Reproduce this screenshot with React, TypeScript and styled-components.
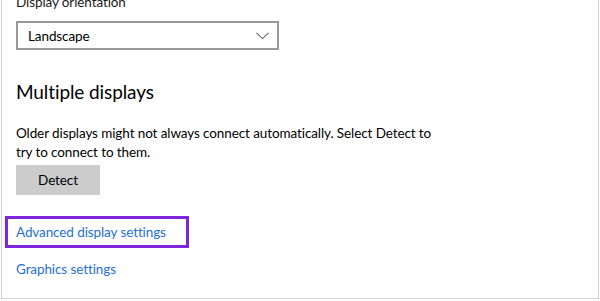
import React from 'react';
import styled, {createGlobalStyle} from "styled-components";

const GlobalStyle = createGlobalStyle`
  html, body {
    margin: 0;
    padding: 0;
    background: #ffffff;
  }
`

const Frame = styled.div`
  box-sizing: border-box;
  width: 598px;
  height: 299px;
  margin-left: 1px;
  border: 1px solid #d2d2d2;
  border-top: none;
  overflow: hidden;
  font-family: Lato, "Noto Sans", sans-serif;
  font-size: 13.5px;
  letter-spacing: -0.1px;
  color: #000;
`

const Content = styled.div`
  display: flex;
  flex-direction: column;
  align-items: flex-start;
  padding-left: 14px;
  margin-top: -8px;
`

const Label = styled.div`
  line-height: 20px;
  color: #1a1a1a;
`

const Select = styled.div`
  box-sizing: border-box;
  width: 263px;
  height: 29px;
  margin-top: 9px;
  border: 2px solid #999999;
  display: flex;
  align-items: center;
  justify-content: space-between;
  padding: 0 8px 0 10px;
`

const Heading = styled.h2`
  margin: 28px 0 0;
  font-size: 19px;
  font-weight: normal;
  line-height: 28px;
`

const Text = styled.p`
  margin: 18px 0 0;
  line-height: 19px;
  max-width: 420px;
`

const Button = styled.button`
  width: 84px;
  height: 30px;
  margin-top: 3px;
  border: none;
  background: #cccccc;
  font-family: inherit;
  font-size: inherit;
  letter-spacing: inherit;
  color: #000;
  padding: 0;
`

const Highlight = styled.div`
  margin: 21px 0 0 -11px;
  border: 3px solid #8125dc;
  padding: 3px 20px 3px 8px;
`

const Link = styled.a<{ $top?: number }>`
  display: block;
  margin-top: ${p => p.$top ?? 0}px;
  line-height: 20px;
  color: #1f6fd6;
  text-decoration: none;
`

const Chevron = () => (
    <svg width="13" height="8" viewBox="0 0 13 8">
        <path d="M0.5 0.8 L6.5 6.6 L12.5 0.8" fill="none" stroke="#666" strokeWidth="1.1"/>
    </svg>
)

const App = () => {
    return (
        <>
            <GlobalStyle/>
            <Frame>
                <Content>
                    <Label>Display orientation</Label>
                    <Select>
                        <span>Landscape</span>
                        <Chevron/>
                    </Select>
                    <Heading>Multiple displays</Heading>
                    <Text>
                        Older displays might not always connect automatically. Select Detect to
                        try to connect to them.
                    </Text>
                    <Button>Detect</Button>
                    <Highlight>
                        <Link href="#">Advanced display settings</Link>
                    </Highlight>
                    <Link href="#" $top={11}>Graphics settings</Link>
                </Content>
            </Frame>
        </>
    );
};

export default App;
